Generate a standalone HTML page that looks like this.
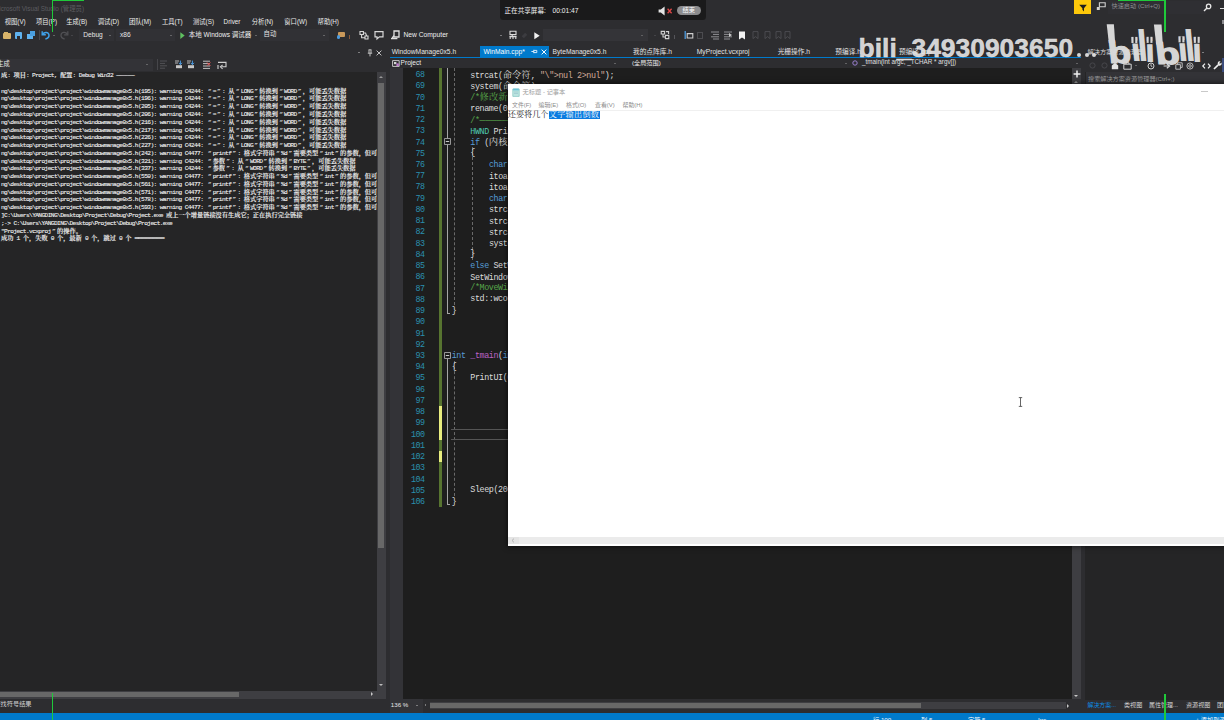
<!DOCTYPE html>
<html lang="zh-CN"><head><meta charset="utf-8"><title>Visual Studio</title>
<style>
html,body{margin:0;padding:0;background:#2d2d30;}
body{width:1224px;height:720px;overflow:hidden;position:relative;font-family:"Liberation Sans","Noto Sans CJK SC",sans-serif;}
#root{position:absolute;left:0;top:0;width:1224px;height:720px;overflow:hidden;background:#2d2d30;}
.b{position:absolute;}
.t{position:absolute;white-space:pre;font-family:"Liberation Sans","Noto Sans CJK SC",sans-serif;}
.m{position:absolute;white-space:pre;font-family:"Liberation Mono","Noto Serif CJK SC",monospace;}
.m i{font-style:normal;}
.cj{letter-spacing:0;}
svg{position:absolute;overflow:visible;}
</style><style>
.o{font-size:6.21px;color:#eeeeee;-webkit-text-stroke:0.12px #eeeeee;letter-spacing:-0.61px;}
.o .cj{letter-spacing:0;font-weight:600;}
.o .q{display:inline-block;width:6.21px;text-align:center;letter-spacing:0;}
.c .q{display:inline-block;width:9.3px;text-align:center;letter-spacing:0;}
.ln{font-size:8.4px;color:#2b91af;text-align:right;letter-spacing:-0.6px;}
.c{font-size:8.4px;letter-spacing:-0.39px;color:#dcdcdc;}
.c .cj{font-size:9.3px;letter-spacing:0;}
</style></head><body><div id="root">

<div class="t" style="left:-6px;top:4.72px;font-size:6.4px;line-height:8.96px;color:#5c5c60;">Microsoft Visual Studio (管理员)</div>
<div class="t" style="left:4.7px;top:18.29px;font-size:6.3px;line-height:8.82px;color:#ececec;">视图(V)</div>
<div class="t" style="left:36px;top:18.29px;font-size:6.3px;line-height:8.82px;color:#ececec;">项目(P)</div>
<div class="t" style="left:66.2px;top:18.29px;font-size:6.3px;line-height:8.82px;color:#ececec;">生成(B)</div>
<div class="t" style="left:97.8px;top:18.29px;font-size:6.3px;line-height:8.82px;color:#ececec;">调试(D)</div>
<div class="t" style="left:129px;top:18.29px;font-size:6.3px;line-height:8.82px;color:#ececec;">团队(M)</div>
<div class="t" style="left:162px;top:18.29px;font-size:6.3px;line-height:8.82px;color:#ececec;">工具(T)</div>
<div class="t" style="left:193px;top:18.29px;font-size:6.3px;line-height:8.82px;color:#ececec;">测试(S)</div>
<div class="t" style="left:223.6px;top:18.29px;font-size:6.3px;line-height:8.82px;color:#ececec;">Driver</div>
<div class="t" style="left:251.8px;top:18.29px;font-size:6.3px;line-height:8.82px;color:#ececec;">分析(N)</div>
<div class="t" style="left:284.3px;top:18.29px;font-size:6.3px;line-height:8.82px;color:#ececec;">窗口(W)</div>
<div class="t" style="left:317.6px;top:18.29px;font-size:6.3px;line-height:8.82px;color:#ececec;">帮助(H)</div>
<div class="b" style="left:3.0px;top:33.15px;width:8px;height:5.5px;background:#d8b36a;border-radius:1px;"></div>
<div class="b" style="left:3.5px;top:31.9px;width:4px;height:2px;background:#d8b36a;"></div>
<div class="b" style="left:15.25px;top:31.9px;width:6.5px;height:7px;background:#5fb2ee;border-radius:1px;"></div>
<div class="b" style="left:17.0px;top:35.7px;width:3px;height:3px;background:#2d2d30;"></div>
<div class="b" style="left:27.25px;top:33.65px;width:5.5px;height:5.5px;background:#5fb2ee;"></div>
<div class="b" style="left:30.0px;top:31.4px;width:5px;height:5px;background:#4a9fe0;"></div>
<div class="b" style="left:39px;top:30px;width:0.6px;height:10px;background:#46464a;"></div>
<svg style="left:41px;top:30.4px" width="10" height="10" viewBox="0 0 10 10"><path d="M1.2 1.2v3.6h3.6" fill="none" stroke="#3fa2ea" stroke-width="1.4"/><path d="M1.6 4.4C3.2 1.6 7.6 1.8 8 5c.2 2-1.4 3.4-3.6 4" fill="none" stroke="#3fa2ea" stroke-width="1.5"/></svg>
<div class="b" style="left:52.9px;top:34.6px;border-left:1.6px solid transparent;border-right:1.6px solid transparent;border-top:1.6px solid #9a9a9a;"></div>
<svg style="left:59px;top:30.4px" width="10" height="10" viewBox="0 0 10 10"><path d="M8.8 1.2v3.6H5.2" fill="none" stroke="#505054" stroke-width="1.3"/><path d="M8.4 4.4C6.8 1.6 2.4 1.8 2 5c-.2 2 1.4 3.4 3.6 4" fill="none" stroke="#505054" stroke-width="1.3"/></svg>
<div class="b" style="left:70.9px;top:34.6px;border-left:1.6px solid transparent;border-right:1.6px solid transparent;border-top:1.6px solid #5a5a5e;"></div>
<div class="b" style="left:79px;top:29.4px;width:35px;height:12px;background:#313135;"></div>
<div class="t" style="left:83.3px;top:30.28px;font-size:6.6px;line-height:9.24px;color:#e6e6e6;">Debug</div>
<div class="b" style="left:109.4px;top:34.6px;border-left:1.6px solid transparent;border-right:1.6px solid transparent;border-top:1.6px solid #9a9a9a;"></div>
<div class="b" style="left:116px;top:29.4px;width:59px;height:12px;background:#313135;"></div>
<div class="t" style="left:120px;top:30.28px;font-size:6.6px;line-height:9.24px;color:#e6e6e6;">x86</div>
<div class="b" style="left:169.9px;top:34.6px;border-left:1.6px solid transparent;border-right:1.6px solid transparent;border-top:1.6px solid #9a9a9a;"></div>
<svg style="left:180.2px;top:31.799999999999997px" width="5" height="8" viewBox="0 0 5 8"><path d="M0.3 0.3L4.7 3.6 0.3 6.9z" fill="#5fc060"/></svg>
<div class="t" style="left:188.8px;top:30.35px;font-size:6.5px;line-height:9.1px;color:#f0f0f0;">本地 Windows 调试器</div>
<div class="b" style="left:254.9px;top:34.6px;border-left:1.6px solid transparent;border-right:1.6px solid transparent;border-top:1.6px solid #9a9a9a;"></div>
<div class="b" style="left:260px;top:29.4px;width:69px;height:12px;background:#313135;"></div>
<div class="t" style="left:263.6px;top:30.42px;font-size:6.4px;line-height:8.96px;color:#e6e6e6;">自动</div>
<div class="b" style="left:323.4px;top:34.6px;border-left:1.6px solid transparent;border-right:1.6px solid transparent;border-top:1.6px solid #9a9a9a;"></div>
<div class="b" style="left:337.5px;top:32.4px;width:7px;height:5px;background:#c9985a;border-radius:1px;"></div>
<div class="b" style="left:336.75px;top:35.15px;width:3.5px;height:3.5px;background:#4b9be0;border-radius:2px;"></div>
<div class="b" style="left:348.6px;top:35.4px;width:1.8px;height:4px;background:#8a5a3c;"></div>
<svg style="left:358.5px;top:30.4px" width="10" height="10" viewBox="0 0 10 10"><path d="M1 1.5h3.4v3H1zM6 6h3v3H6zM4.4 3h2.2l1 3M2.6 4.5v3.2h3.4" fill="none" stroke="#d8d8d8" stroke-width="1.1"/></svg>
<svg style="left:373.5px;top:30.4px" width="10" height="10" viewBox="0 0 10 10"><path d="M1 1.6h8v5.2H5.4L3 9V6.8H1z" fill="none" stroke="#d8d8d8" stroke-width="1.2"/></svg>
<svg style="left:390px;top:30.4px" width="10" height="10" viewBox="0 0 10 10"><path d="M4 1h5v6H4zM1 8.6h6.4M2 8.4l2-3" fill="none" stroke="#e0e0e0" stroke-width="1.3"/></svg>
<div class="t" style="left:403.5px;top:30.21px;font-size:6.7px;line-height:9.38px;color:#f0f0f0;">New Computer</div>
<div class="b" style="left:500.4px;top:34.6px;border-left:1.6px solid transparent;border-right:1.6px solid transparent;border-top:1.6px solid #c8c8c8;"></div>
<svg style="left:508px;top:30.4px" width="10" height="10" viewBox="0 0 10 10"><path d="M2 1.2h6v3.4H2zM4.2 4.6v2M1.4 6.6h7.2M2.2 6.8v2.2M5 6.8v2.2M7.8 6.8v2.2" fill="none" stroke="#dcdcdc" stroke-width="1.1"/></svg>
<div class="b" style="left:522px;top:33.9px;width:5px;height:3px;background:#3c3c40;transform:rotate(-45deg);"></div>
<svg style="left:533.6px;top:31.599999999999998px" width="6" height="8" viewBox="0 0 6 8"><path d="M0.3 0.3L5.7 3.8 0.3 7.3z" fill="#f2f2f2"/></svg>
<div class="b" style="left:543px;top:28.8px;width:104.5px;height:12.6px;background:#343438;"></div>
<div class="b" style="left:641.4px;top:34.6px;border-left:1.6px solid transparent;border-right:1.6px solid transparent;border-top:1.6px solid #8a8a8a;"></div>
<div class="b" style="left:653.6px;top:34.699999999999996px;border-left:1.4px solid transparent;border-right:1.4px solid transparent;border-top:1.4px solid #5a5a5e;"></div>
<svg style="left:660px;top:30.4px" width="10" height="10" viewBox="0 0 10 10"><path d="M1.2 1.4h3.4v2.6H1.2zM5.4 5.4h3.4v3.2H5.4zM3 4v3h2.4M6 1.6h2.6v2.4" fill="none" stroke="#d2d2d2" stroke-width="1.1"/></svg>
<div class="b" style="left:673.6px;top:34.9px;width:1.2px;height:4.5px;background:#55555a;"></div>
<svg style="left:684px;top:30.4px" width="10" height="10" viewBox="0 0 10 10"><path d="M1.2 1v8" stroke="#4b9be0" stroke-width="1.3"/><path d="M3.2 3.6h5.6v4.4H3.2z" fill="none" stroke="#cfcfcf" stroke-width="1.1"/></svg>
<div class="b" style="left:697px;top:32.4px;width:6px;height:6.5px;background:transparent;border:0.8px solid #4c4c50;box-sizing:border-box;"></div>
<svg style="left:710px;top:30.4px" width="10" height="10" viewBox="0 0 10 10"><path d="M1 2h8M3 4.4h6M1 6.8h8M3 9h6" stroke="#9a9a9e" stroke-width="0.9"/></svg>
<svg style="left:722.5px;top:30.4px" width="10" height="10" viewBox="0 0 10 10"><path d="M1 2h8M1 4.4h6M1 6.8h8M1 9h6" stroke="#9a9a9e" stroke-width="0.9"/><path d="M6 3l3 2-3 2z" fill="#c8c8c8"/></svg>
<svg style="left:737.5px;top:30.799999999999997px" width="8" height="10" viewBox="0 0 8 10"><path d="M1 0.6h6v8L4 6.4 1 8.6z" fill="#f2f2f2"/></svg>
<svg style="left:751.5px;top:31.0px" width="7" height="9" viewBox="0 0 7 9"><path d="M1 0.6h5v7L3.5 5.6 1 7.6z" fill="none" stroke="#4e4e52" stroke-width="0.9"/></svg>
<svg style="left:763.5px;top:31.0px" width="7" height="9" viewBox="0 0 7 9"><path d="M1 0.6h5v7L3.5 5.6 1 7.6z" fill="none" stroke="#4e4e52" stroke-width="0.9"/></svg>
<svg style="left:774.5px;top:31.0px" width="7" height="9" viewBox="0 0 7 9"><path d="M1 0.6h5v7L3.5 5.6 1 7.6z" fill="none" stroke="#4e4e52" stroke-width="0.9"/></svg>
<svg style="left:783.5px;top:31.0px" width="7" height="9" viewBox="0 0 7 9"><path d="M1 0.6h5v7L3.5 5.6 1 7.6z" fill="none" stroke="#4e4e52" stroke-width="0.9"/></svg>
<div class="b" style="left:499.5px;top:-4px;width:206.5px;height:24.4px;background:#1a1a1b;border-radius:3.5px;"></div>
<div class="t" style="left:504.5px;top:5.58px;font-size:6.6px;line-height:9.24px;color:#f0f0f0;">正在共享屏幕:</div>
<div class="t" style="left:552.5px;top:5.51px;font-size:6.7px;line-height:9.38px;color:#f0f0f0;">00:01:47</div>
<svg style="left:658px;top:5.6px" width="16" height="10" viewBox="0 0 16 10"><path d="M0.6 3.4h2.2L6.6 0.6v8.8L2.8 6.6H0.6z" fill="#e4e4e4"/><path d="M9.6 2.8l4 4.4M13.6 2.8l-4 4.4" stroke="#e04848" stroke-width="1.3"/></svg>
<div class="b" style="left:676.5px;top:5.6px;width:24.5px;height:9.8px;background:#8c8c8e;border-radius:5px;"></div>
<div class="t" style="left:682.5px;top:6.06px;font-size:6.2px;line-height:8.68px;color:#ffffff;">结束</div>
<div class="b" style="left:1074px;top:0px;width:17px;height:14.4px;background:#fdc80a;"></div>
<svg style="left:1077.5px;top:3.5px" width="10" height="8" viewBox="0 0 10 8"><path d="M1.2 0.8h7.6L6 4.2v3.4L4.4 5.8V4.2z" fill="#1e1e1e"/></svg>
<svg style="left:1095.5px;top:2.2px" width="10" height="9" viewBox="0 0 10 9"><path d="M3.4 0.8h5.8v4H3.4z" fill="none" stroke="#d0d0d0" stroke-width="1.1"/><path d="M0.8 5h3v3h-3z" fill="#d0d0d0"/></svg>
<div class="b" style="left:1108px;top:0.5px;width:98px;height:13px;background:#2f2f33;"></div>
<div class="t" style="left:1111.5px;top:2.46px;font-size:6.2px;line-height:8.68px;color:#8e8e92;">快速启动 (Ctrl+Q)</div>
<svg style="left:1203px;top:2.6px" width="9" height="9" viewBox="0 0 9 9"><circle cx="5.6" cy="3.4" r="2.2" fill="none" stroke="#e8e8e8" stroke-width="1.3"/><path d="M4 5l-3 3" stroke="#e8e8e8" stroke-width="1.5"/></svg>
<div class="b" style="left:1220px;top:8px;width:4px;height:1.2px;background:#dcdcdc;"></div>
<div class="b" style="left:1221.5px;top:20px;width:3px;height:4px;background:#8a8a8e;"></div>
<div class="b" style="left:358.2px;top:51.7px;border-left:1.8px solid transparent;border-right:1.8px solid transparent;border-top:1.8px solid #d0d0d0;"></div>
<svg style="left:366.6px;top:48.6px" width="6" height="8" viewBox="0 0 6 8"><path d="M1.6 0.8h2.8M2 0.8v3.4M4 0.8v3.4M0.8 4.2h4.4M3 4.2v3.2" fill="none" stroke="#d0d0d0" stroke-width="0.9"/></svg>
<svg style="left:375.6px;top:49.6px" width="6" height="6" viewBox="0 0 6 6"><path d="M0.6 0.6l4.8 4.8M5.4 0.6L0.6 5.4" stroke="#d6d6d6" stroke-width="0.9"/></svg>
<div class="b" style="left:480.4px;top:46.2px;width:68.2px;height:11px;background:#007acc;"></div>
<div class="t" style="left:483.5px;top:46.71px;font-size:6.7px;line-height:9.38px;color:#ffffff;">WinMain.cpp*</div>
<svg style="left:531px;top:49.4px" width="7" height="5" viewBox="0 0 7 5"><path d="M0.4 2.5h2.4M2.8 0.8v3.4M2.8 1.4h3v2.2h-3" fill="none" stroke="#e8f4ff" stroke-width="0.9"/></svg>
<svg style="left:540.6px;top:49px" width="6" height="6" viewBox="0 0 6 6"><path d="M0.6 0.6l4.8 4.8M5.4 0.6L0.6 5.4" stroke="#f4faff" stroke-width="1"/></svg>
<div class="t" style="left:391.8px;top:46.81px;font-size:6.7px;line-height:9.38px;color:#e4e4e4;">WindowManage0x5.h</div>
<div class="t" style="left:552.5px;top:46.81px;font-size:6.7px;line-height:9.38px;color:#e4e4e4;">ByteManage0x5.h</div>
<div class="t" style="left:633px;top:46.81px;font-size:6.7px;line-height:9.38px;color:#e4e4e4;">我的点阵库.h</div>
<div class="t" style="left:696.8px;top:46.81px;font-size:6.7px;line-height:9.38px;color:#e4e4e4;">MyProject.vcxproj</div>
<div class="t" style="left:777.7px;top:46.81px;font-size:6.7px;line-height:9.38px;color:#e4e4e4;">光栅操作.h</div>
<div class="t" style="left:835.3px;top:46.81px;font-size:6.7px;line-height:9.38px;color:#e4e4e4;">预编译.h</div>
<div class="t" style="left:899px;top:46.81px;font-size:6.7px;line-height:9.38px;color:#e4e4e4;">预编译.cpp</div>
<div class="b" style="left:389.5px;top:57px;width:691.5px;height:1.1px;background:#007acc;"></div>
<div class="b" style="left:0px;top:58.7px;width:152.5px;height:12.2px;background:#333337;"></div>
<div class="t" style="left:-2.8px;top:60.39px;font-size:6.3px;line-height:8.82px;color:#e6e6e6;">生成</div>
<div class="b" style="left:146.4px;top:64.2px;border-left:1.6px solid transparent;border-right:1.6px solid transparent;border-top:1.6px solid #9a9a9a;"></div>
<div class="b" style="left:157px;top:59px;width:0.6px;height:11px;background:#46464a;"></div>
<svg style="left:159px;top:60px" width="9" height="10" viewBox="0 0 9 10"><path d="M1 1h7M1 3.4h5M1 5.8h7M1 8.2h5" stroke="#56565a" stroke-width="0.9"/></svg>
<svg style="left:174.0px;top:60.4px" width="9" height="9" viewBox="0 0 9 9"><path d="M1 1h4M1 3h3" stroke="#c8c8c8" stroke-width="0.9"/><path d="M2 5.2h6v3H2z" fill="#c8c8c8"/><path d="M6.4 0.6v4M4.8 2.8l1.6 1.8L8 2.8" fill="none" stroke="#4b9be0" stroke-width="1"/></svg>
<svg style="left:185.5px;top:60.4px" width="9" height="9" viewBox="0 0 9 9"><path d="M1 1h4M1 3h3" stroke="#c8c8c8" stroke-width="0.9"/><path d="M2 5.2h6v3H2z" fill="#c8c8c8"/><path d="M6.4 0.6v4M4.8 2.8l1.6 1.8L8 2.8" fill="none" stroke="#4b9be0" stroke-width="1"/></svg>
<svg style="left:201.5px;top:60.2px" width="9" height="10" viewBox="0 0 9 10"><path d="M1 1.2h7M1 3.6h7M1 6h7M1 8.4h7" stroke="#d0d0d0" stroke-width="0.9"/><path d="M5 2.4l3.4 3.4M8.4 2.4L5 5.8" stroke="#e05050" stroke-width="1"/></svg>
<svg style="left:216.5px;top:60.6px" width="10" height="9" viewBox="0 0 10 9"><path d="M1 1.4h8v4.4H4.4" fill="none" stroke="#d0d0d0" stroke-width="1.1"/><path d="M5.6 3.8L3.4 5.8l2.2 2M1 4v4" fill="none" stroke="#d0d0d0" stroke-width="1.1"/></svg>
<div class="b" style="left:0px;top:71.8px;width:376.5px;height:618.8px;background:#252526;"></div>
<div class="b" style="left:376.5px;top:71.8px;width:9.5px;height:618.8px;background:#3e3e42;"></div>
<div class="b" style="left:378.6px;top:75.5px;border-left:2.2px solid transparent;border-right:2.2px solid transparent;border-bottom:2.2px solid #999;"></div>
<div class="b" style="left:377.6px;top:82.6px;width:6.4px;height:465px;background:#686868;"></div>
<div class="b" style="left:378.6px;top:683.9px;border-left:2.2px solid transparent;border-right:2.2px solid transparent;border-top:2.2px solid #bdbdbd;"></div>
<div class="b" style="left:0px;top:690.6px;width:386px;height:8px;background:#3e3e42;"></div>
<div class="b" style="left:0px;top:691.6px;width:239px;height:5.6px;background:#686868;"></div>
<div class="b" style="left:371.0px;top:692.4px;border-top:2px solid transparent;border-bottom:2px solid transparent;border-left:2px solid #c8c8c8;"></div>
<div class="t" style="left:-5.6px;top:700.26px;font-size:6.2px;line-height:8.68px;color:#d0d0d0;">查找符号结果</div>
<div class="b" style="left:0;top:71.8px;width:376.5px;height:618.8px;overflow:hidden;">
<div class="m o" style="left:1.0px;top:0.4px;line-height:8px;"><i class="cj">成</i>: <i class="cj">项目</i>: Project, <i class="cj">配置</i>: Debug Win32 <i class="cj">—————</i></div>
<div class="m o" style="left:1.0px;top:15.93px;line-height:8px;">ng\desktop\project\project\windowmanage0x5.h(195): warning C4244: <i class="q">“</i>=<i class="q">”</i>: <i class="cj">从</i><i class="q">“</i>LONG<i class="q">”</i><i class="cj">转换到</i><i class="q">“</i>WORD<i class="q">”</i><i class="cj">，可能丢失数据</i></div>
<div class="m o" style="left:1.0px;top:23.7px;line-height:8px;">ng\desktop\project\project\windowmanage0x5.h(196): warning C4244: <i class="q">“</i>=<i class="q">”</i>: <i class="cj">从</i><i class="q">“</i>LONG<i class="q">”</i><i class="cj">转换到</i><i class="q">“</i>WORD<i class="q">”</i><i class="cj">，可能丢失数据</i></div>
<div class="m o" style="left:1.0px;top:31.47px;line-height:8px;">ng\desktop\project\project\windowmanage0x5.h(205): warning C4244: <i class="q">“</i>=<i class="q">”</i>: <i class="cj">从</i><i class="q">“</i>LONG<i class="q">”</i><i class="cj">转换到</i><i class="q">“</i>WORD<i class="q">”</i><i class="cj">，可能丢失数据</i></div>
<div class="m o" style="left:1.0px;top:39.23px;line-height:8px;">ng\desktop\project\project\windowmanage0x5.h(206): warning C4244: <i class="q">“</i>=<i class="q">”</i>: <i class="cj">从</i><i class="q">“</i>LONG<i class="q">”</i><i class="cj">转换到</i><i class="q">“</i>WORD<i class="q">”</i><i class="cj">，可能丢失数据</i></div>
<div class="m o" style="left:1.0px;top:47.0px;line-height:8px;">ng\desktop\project\project\windowmanage0x5.h(216): warning C4244: <i class="q">“</i>=<i class="q">”</i>: <i class="cj">从</i><i class="q">“</i>LONG<i class="q">”</i><i class="cj">转换到</i><i class="q">“</i>WORD<i class="q">”</i><i class="cj">，可能丢失数据</i></div>
<div class="m o" style="left:1.0px;top:54.77px;line-height:8px;">ng\desktop\project\project\windowmanage0x5.h(217): warning C4244: <i class="q">“</i>=<i class="q">”</i>: <i class="cj">从</i><i class="q">“</i>LONG<i class="q">”</i><i class="cj">转换到</i><i class="q">“</i>WORD<i class="q">”</i><i class="cj">，可能丢失数据</i></div>
<div class="m o" style="left:1.0px;top:62.54px;line-height:8px;">ng\desktop\project\project\windowmanage0x5.h(226): warning C4244: <i class="q">“</i>=<i class="q">”</i>: <i class="cj">从</i><i class="q">“</i>LONG<i class="q">”</i><i class="cj">转换到</i><i class="q">“</i>WORD<i class="q">”</i><i class="cj">，可能丢失数据</i></div>
<div class="m o" style="left:1.0px;top:70.3px;line-height:8px;">ng\desktop\project\project\windowmanage0x5.h(227): warning C4244: <i class="q">“</i>=<i class="q">”</i>: <i class="cj">从</i><i class="q">“</i>LONG<i class="q">”</i><i class="cj">转换到</i><i class="q">“</i>WORD<i class="q">”</i><i class="cj">，可能丢失数据</i></div>
<div class="m o" style="left:1.0px;top:78.07px;line-height:8px;">ng\desktop\project\project\windowmanage0x5.h(242): warning C4477: <i class="q">“</i>printf<i class="q">”</i>: <i class="cj">格式字符串</i><i class="q">“</i>%d<i class="q">”</i><i class="cj">需要类型</i><i class="q">“</i>int<i class="q">”</i><i class="cj">的参数，但可变参数</i> 1 <i class="cj">拥有了类型</i><i class="q">“</i>HWND<i class="q">”</i></div>
<div class="m o" style="left:1.0px;top:85.84px;line-height:8px;">ng\desktop\project\project\windowmanage0x5.h(321): warning C4244: <i class="q">“</i><i class="cj">参数</i><i class="q">”</i>: <i class="cj">从</i><i class="q">“</i>WORD<i class="q">”</i><i class="cj">转换到</i><i class="q">“</i>BYTE<i class="q">”</i><i class="cj">，可能丢失数据</i></div>
<div class="m o" style="left:1.0px;top:93.6px;line-height:8px;">ng\desktop\project\project\windowmanage0x5.h(337): warning C4244: <i class="q">“</i><i class="cj">参数</i><i class="q">”</i>: <i class="cj">从</i><i class="q">“</i>WORD<i class="q">”</i><i class="cj">转换到</i><i class="q">“</i>BYTE<i class="q">”</i><i class="cj">，可能丢失数据</i></div>
<div class="m o" style="left:1.0px;top:101.37px;line-height:8px;">ng\desktop\project\project\windowmanage0x5.h(550): warning C4477: <i class="q">“</i>printf<i class="q">”</i>: <i class="cj">格式字符串</i><i class="q">“</i>%d<i class="q">”</i><i class="cj">需要类型</i><i class="q">“</i>int<i class="q">”</i><i class="cj">的参数，但可变参数</i> 1 <i class="cj">拥有了类型</i><i class="q">“</i>HWND<i class="q">”</i></div>
<div class="m o" style="left:1.0px;top:109.14px;line-height:8px;">ng\desktop\project\project\windowmanage0x5.h(561): warning C4477: <i class="q">“</i>printf<i class="q">”</i>: <i class="cj">格式字符串</i><i class="q">“</i>%d<i class="q">”</i><i class="cj">需要类型</i><i class="q">“</i>int<i class="q">”</i><i class="cj">的参数，但可变参数</i> 1 <i class="cj">拥有了类型</i><i class="q">“</i>HWND<i class="q">”</i></div>
<div class="m o" style="left:1.0px;top:116.91px;line-height:8px;">ng\desktop\project\project\windowmanage0x5.h(571): warning C4477: <i class="q">“</i>printf<i class="q">”</i>: <i class="cj">格式字符串</i><i class="q">“</i>%d<i class="q">”</i><i class="cj">需要类型</i><i class="q">“</i>int<i class="q">”</i><i class="cj">的参数，但可变参数</i> 1 <i class="cj">拥有了类型</i><i class="q">“</i>HWND<i class="q">”</i></div>
<div class="m o" style="left:1.0px;top:124.67px;line-height:8px;">ng\desktop\project\project\windowmanage0x5.h(578): warning C4477: <i class="q">“</i>printf<i class="q">”</i>: <i class="cj">格式字符串</i><i class="q">“</i>%d<i class="q">”</i><i class="cj">需要类型</i><i class="q">“</i>int<i class="q">”</i><i class="cj">的参数，但可变参数</i> 1 <i class="cj">拥有了类型</i><i class="q">“</i>HWND<i class="q">”</i></div>
<div class="m o" style="left:1.0px;top:132.44px;line-height:8px;">ng\desktop\project\project\windowmanage0x5.h(593): warning C4477: <i class="q">“</i>printf<i class="q">”</i>: <i class="cj">格式字符串</i><i class="q">“</i>%d<i class="q">”</i><i class="cj">需要类型</i><i class="q">“</i>int<i class="q">”</i><i class="cj">的参数，但可变参数</i> 1 <i class="cj">拥有了类型</i><i class="q">“</i>HWND<i class="q">”</i></div>
<div class="m o" style="left:1.0px;top:140.21px;line-height:8px;">]C:\Users\YANGDING\Desktop\Project\Debug\Project.exe <i class="cj">或上一个增量链接没有生成它；正在执行完全链接</i></div>
<div class="m o" style="left:1.0px;top:147.97px;line-height:8px;">;-&gt; C:\Users\YANGDING\Desktop\Project\Debug\Project.exe</div>
<div class="m o" style="left:1.0px;top:155.74px;line-height:8px;">"Project.vcxproj<i class="q">”</i><i class="cj">的操作。</i></div>
<div class="m o" style="left:1.0px;top:163.51px;line-height:8px;"><i class="cj">成功</i> 1 <i class="cj">个，失败</i> 0 <i class="cj">个，最新</i> 0 <i class="cj">个，跳过</i> 0 <i class="cj">个</i> <i class="cj">════════</i></div>
</div>
<div class="b" style="left:389.5px;top:58.1px;width:691.5px;height:10.2px;background:#2d2d30;"></div>
<div class="b" style="left:389.5px;top:68.3px;width:682.5px;height:631px;background:#1e1e1e;"></div>
<div class="b" style="left:389.5px;top:68.3px;width:13px;height:631px;background:#333337;"></div>
<svg style="left:392.2px;top:59.6px" width="8" height="7" viewBox="0 0 8 7"><path d="M0.6 0.6h6.6v5.8H0.6z" fill="none" stroke="#d6d6d6" stroke-width="0.9"/><path d="M2 2h2.4v2.2H2z" fill="#d6d6d6"/><path d="M4.4 3.4h2.4v2.6H4.4z" fill="#c27ad0"/></svg>
<div class="t" style="left:400.6px;top:58.08px;font-size:6.6px;line-height:9.24px;color:#ececec;">Project</div>
<div class="b" style="left:613.5px;top:62.65px;border-left:1.5px solid transparent;border-right:1.5px solid transparent;border-top:1.5px solid #9a9a9a;"></div>
<div class="t" style="left:631.9px;top:58.56px;font-size:6.2px;line-height:8.68px;color:#ececec;">(全局范围)</div>
<div class="b" style="left:844.5px;top:62.65px;border-left:1.5px solid transparent;border-right:1.5px solid transparent;border-top:1.5px solid #9a9a9a;"></div>
<svg style="left:852px;top:60.2px" width="6" height="6" viewBox="0 0 6 6"><circle cx="3" cy="3" r="2.2" fill="none" stroke="#9a7fd0" stroke-width="1"/></svg>
<div class="t" style="left:862px;top:58.39px;font-size:6.3px;line-height:8.82px;color:#e0e0e0;">_tmain(int argc, _TCHAR * argv[])</div>
<div class="b" style="left:1076.0px;top:62.65px;border-left:1.5px solid transparent;border-right:1.5px solid transparent;border-top:1.5px solid #9a9a9a;"></div>
<div class="b" style="left:1072px;top:68.3px;width:9px;height:631px;background:#3e3e42;"></div>
<svg style="left:1072.6px;top:70px" width="8" height="8" viewBox="0 0 8 8"><path d="M4 0.6v6.8M0.6 4h6.8" stroke="#f0f0f0" stroke-width="1.5"/></svg>
<div class="b" style="left:1074.4px;top:81.0px;border-left:2px solid transparent;border-right:2px solid transparent;border-bottom:2px solid #999;"></div>
<div class="b" style="left:1074.2px;top:694.9px;border-left:2.2px solid transparent;border-right:2.2px solid transparent;border-top:2.2px solid #c8c8c8;"></div>
<div class="b" style="left:389.5px;top:699.3px;width:691.5px;height:13.5px;background:#2d2d30;"></div>
<div class="b" style="left:389.5px;top:699.3px;width:33px;height:13.5px;background:#333337;"></div>
<div class="t" style="left:390.8px;top:701.26px;font-size:6.2px;line-height:8.68px;color:#e6e6e6;">136 %</div>
<div class="b" style="left:416.1px;top:705.05px;border-left:1.5px solid transparent;border-right:1.5px solid transparent;border-top:1.5px solid #c8c8c8;"></div>
<div class="b" style="left:425.1px;top:703.8000000000001px;border-top:1.8px solid transparent;border-bottom:1.8px solid transparent;border-right:1.8px solid #c8c8c8;"></div>
<div class="b" style="left:430px;top:701.6px;width:636px;height:7.4px;background:#3e3e42;"></div>
<div class="b" style="left:430px;top:702.6px;width:491px;height:5.4px;background:#686868;"></div>
<div class="b" style="left:1066.5px;top:703.6px;border-top:2px solid transparent;border-bottom:2px solid transparent;border-left:2px solid #c8c8c8;"></div>
<div class="b" style="left:438.7px;top:68.3px;width:3.7px;height:337.61px;background:#577430;"></div>
<div class="b" style="left:438.7px;top:405.91px;width:3.7px;height:33.71px;background:#e9ed7f;"></div>
<div class="b" style="left:438.7px;top:439.62px;width:3.7px;height:11.24px;background:#577430;"></div>
<div class="b" style="left:438.7px;top:450.86px;width:3.7px;height:11.24px;background:#e9ed7f;"></div>
<div class="b" style="left:438.7px;top:462.1px;width:3.7px;height:44.95px;background:#577430;"></div>
<div class="b" style="left:447px;top:68.3px;width:0.9px;height:245.077px;background:#a5a5a5;"></div>
<div class="b" style="left:447px;top:313.38px;width:3.2px;height:0.9px;background:#a5a5a5;"></div>
<div class="b" style="left:447px;top:355.33px;width:0.9px;height:149.08px;background:#a5a5a5;"></div>
<div class="b" style="left:447px;top:504.41px;width:3.2px;height:0.9px;background:#a5a5a5;"></div>
<svg style="left:444px;top:138.42px" width="7" height="7" viewBox="0 0 7 7"><path d="M0.5 0.5h6v6h-6z" fill="#1e1e1e" stroke="#a5a5a5" stroke-width="0.9"/><path d="M1.8 3.5h3.4" stroke="#dcdcdc" stroke-width="0.9"/></svg>
<svg style="left:444px;top:351.93px" width="7" height="7" viewBox="0 0 7 7"><path d="M0.5 0.5h6v6h-6z" fill="#1e1e1e" stroke="#a5a5a5" stroke-width="0.9"/><path d="M1.8 3.5h3.4" stroke="#dcdcdc" stroke-width="0.9"/></svg>
<div class="b" style="left:453.6px;top:68.3px;height:236.48px;width:0;border-left:0.9px dashed #6a6a6a;"></div>
<div class="b" style="left:472px;top:147.46px;height:112.37px;width:0;border-left:0.9px dashed #6a6a6a;"></div>
<div class="b" style="left:453.6px;top:360.96px;height:134.84px;width:0;border-left:0.9px dashed #6a6a6a;"></div>
<div class="b" style="left:451px;top:429.4px;width:625px;height:9.4px;background:transparent;border-top:1px solid #555;border-bottom:1px solid #555;box-sizing:content-box;height:8.4px;"></div>
<div class="b" style="left:0;top:68.3px;width:1072px;height:631px;overflow:hidden;">
<div class="m ln" style="left:404px;width:20.4px;top:1.8px;line-height:11px;">68</div>
<div class="m c" style="left:470.3px;top:1.3px;line-height:11px;"><span style="color:#dcdcdc">strcat(<i class="cj">命令符</i>, </span><span style="color:#cfa898">"\"&gt;nul 2&gt;nul"</span><span style="color:#dcdcdc">);</span></div>
<div class="m ln" style="left:404px;width:20.4px;top:13.04px;line-height:11px;">69</div>
<div class="m c" style="left:470.3px;top:12.54px;line-height:11px;"><span style="color:#dcdcdc">system(<i class="cj">命令符</i>);</span></div>
<div class="m ln" style="left:404px;width:20.4px;top:24.27px;line-height:11px;">70</div>
<div class="m c" style="left:470.3px;top:23.77px;line-height:11px;"><span style="color:#57a64a">/*<i class="cj">修改新生成文件的名字</i>*/</span></div>
<div class="m ln" style="left:404px;width:20.4px;top:35.51px;line-height:11px;">71</div>
<div class="m c" style="left:470.3px;top:35.01px;line-height:11px;"><span style="color:#dcdcdc">rename(0x5<i class="cj">文件名</i>, <i class="cj">目标文件名</i>);</span></div>
<div class="m ln" style="left:404px;width:20.4px;top:46.75px;line-height:11px;">72</div>
<div class="m c" style="left:470.3px;top:46.25px;line-height:11px;"><span style="color:#57a64a">/*<i class="cj">——————————————————</i>*/</span></div>
<div class="m ln" style="left:404px;width:20.4px;top:57.99px;line-height:11px;">73</div>
<div class="m c" style="left:470.3px;top:57.49px;line-height:11px;"><span style="color:#4ec9b0">HWND</span><span style="color:#dcdcdc"> PrintWnd = FindWindow(NULL, <i class="cj">标题</i>);</span></div>
<div class="m ln" style="left:404px;width:20.4px;top:69.22px;line-height:11px;">74</div>
<div class="m c" style="left:470.3px;top:68.72px;line-height:11px;"><span style="color:#569cd6">if</span><span style="color:#dcdcdc"> (<i class="cj">内核对象</i> != NULL)</span></div>
<div class="m ln" style="left:404px;width:20.4px;top:80.46px;line-height:11px;">75</div>
<div class="m c" style="left:470.3px;top:79.96px;line-height:11px;"><span style="color:#dcdcdc">{</span></div>
<div class="m ln" style="left:404px;width:20.4px;top:91.7px;line-height:11px;">76</div>
<div class="m c" style="left:488.9px;top:91.2px;line-height:11px;"><span style="color:#569cd6">char</span><span style="color:#dcdcdc"> <i class="cj">宽</i>[8], <i class="cj">高</i>[8];</span></div>
<div class="m ln" style="left:404px;width:20.4px;top:102.93px;line-height:11px;">77</div>
<div class="m c" style="left:488.9px;top:102.43px;line-height:11px;"><span style="color:#dcdcdc">itoa(<i class="cj">列数</i>, <i class="cj">宽</i>, 10);</span></div>
<div class="m ln" style="left:404px;width:20.4px;top:114.17px;line-height:11px;">78</div>
<div class="m c" style="left:488.9px;top:113.67px;line-height:11px;"><span style="color:#dcdcdc">itoa(<i class="cj">行数</i>, <i class="cj">高</i>, 10);</span></div>
<div class="m ln" style="left:404px;width:20.4px;top:125.41px;line-height:11px;">79</div>
<div class="m c" style="left:488.9px;top:124.91px;line-height:11px;"><span style="color:#569cd6">char</span><span style="color:#dcdcdc"> <i class="cj">命令</i>[64] = "mode con cols=";</span></div>
<div class="m ln" style="left:404px;width:20.4px;top:136.64px;line-height:11px;">80</div>
<div class="m c" style="left:488.9px;top:136.14px;line-height:11px;"><span style="color:#dcdcdc">strcat(<i class="cj">命令</i>, <i class="cj">宽</i>);</span></div>
<div class="m ln" style="left:404px;width:20.4px;top:147.88px;line-height:11px;">81</div>
<div class="m c" style="left:488.9px;top:147.38px;line-height:11px;"><span style="color:#dcdcdc">strcat(<i class="cj">命令</i>, " lines=");</span></div>
<div class="m ln" style="left:404px;width:20.4px;top:159.12px;line-height:11px;">82</div>
<div class="m c" style="left:488.9px;top:158.62px;line-height:11px;"><span style="color:#dcdcdc">strcat(<i class="cj">命令</i>, <i class="cj">高</i>);</span></div>
<div class="m ln" style="left:404px;width:20.4px;top:170.36px;line-height:11px;">83</div>
<div class="m c" style="left:488.9px;top:169.86px;line-height:11px;"><span style="color:#dcdcdc">system(<i class="cj">命令</i>);</span></div>
<div class="m ln" style="left:404px;width:20.4px;top:181.59px;line-height:11px;">84</div>
<div class="m c" style="left:470.3px;top:181.09px;line-height:11px;"><span style="color:#dcdcdc">}</span></div>
<div class="m ln" style="left:404px;width:20.4px;top:192.83px;line-height:11px;">85</div>
<div class="m c" style="left:470.3px;top:192.33px;line-height:11px;"><span style="color:#569cd6">else</span><span style="color:#dcdcdc"> SetWindowPos(PrintWnd, 0, 0, 0, 0, 0, 1);</span></div>
<div class="m ln" style="left:404px;width:20.4px;top:204.07px;line-height:11px;">86</div>
<div class="m c" style="left:470.3px;top:203.57px;line-height:11px;"><span style="color:#dcdcdc">SetWindowTextA(PrintWnd, <i class="cj">标题</i>);</span></div>
<div class="m ln" style="left:404px;width:20.4px;top:215.3px;line-height:11px;">87</div>
<div class="m c" style="left:470.3px;top:214.8px;line-height:11px;"><span style="color:#57a64a">/*MoveWindow(PrintWnd, 0, 0, 800, 600, TRUE);*/</span></div>
<div class="m ln" style="left:404px;width:20.4px;top:226.54px;line-height:11px;">88</div>
<div class="m c" style="left:470.3px;top:226.04px;line-height:11px;"><span style="color:#dcdcdc">std::wcout.imbue(std::locale("chs"));</span></div>
<div class="m ln" style="left:404px;width:20.4px;top:237.78px;line-height:11px;">89</div>
<div class="m c" style="left:451.7px;top:237.28px;line-height:11px;"><span style="color:#dcdcdc">}</span></div>
<div class="m ln" style="left:404px;width:20.4px;top:249.01px;line-height:11px;">90</div>
<div class="m ln" style="left:404px;width:20.4px;top:260.25px;line-height:11px;">91</div>
<div class="m ln" style="left:404px;width:20.4px;top:271.49px;line-height:11px;">92</div>
<div class="m ln" style="left:404px;width:20.4px;top:282.73px;line-height:11px;">93</div>
<div class="m c" style="left:451.7px;top:282.23px;line-height:11px;"><span style="color:#569cd6">int</span><span style="color:#bd63c5"> _tmain</span><span style="color:#dcdcdc">(</span><span style="color:#569cd6">int</span><span style="color:#dcdcdc"> argc, _TCHAR* argv[])</span></div>
<div class="m ln" style="left:404px;width:20.4px;top:293.96px;line-height:11px;">94</div>
<div class="m c" style="left:451.7px;top:293.46px;line-height:11px;"><span style="color:#dcdcdc">{</span></div>
<div class="m ln" style="left:404px;width:20.4px;top:305.2px;line-height:11px;">95</div>
<div class="m c" style="left:470.3px;top:304.7px;line-height:11px;"><span style="color:#dcdcdc">PrintUI(0, 0, 80, 25);</span></div>
<div class="m ln" style="left:404px;width:20.4px;top:316.44px;line-height:11px;">96</div>
<div class="m ln" style="left:404px;width:20.4px;top:327.67px;line-height:11px;">97</div>
<div class="m ln" style="left:404px;width:20.4px;top:338.91px;line-height:11px;">98</div>
<div class="m ln" style="left:404px;width:20.4px;top:350.15px;line-height:11px;">99</div>
<div class="m ln" style="left:404px;width:20.4px;top:361.38px;line-height:11px;">100</div>
<div class="m ln" style="left:404px;width:20.4px;top:372.62px;line-height:11px;">101</div>
<div class="m ln" style="left:404px;width:20.4px;top:383.86px;line-height:11px;">102</div>
<div class="m ln" style="left:404px;width:20.4px;top:395.1px;line-height:11px;">103</div>
<div class="m ln" style="left:404px;width:20.4px;top:406.33px;line-height:11px;">104</div>
<div class="m ln" style="left:404px;width:20.4px;top:417.57px;line-height:11px;">105</div>
<div class="m c" style="left:470.3px;top:417.07px;line-height:11px;"><span style="color:#dcdcdc">Sleep(20000);</span></div>
<div class="m ln" style="left:404px;width:20.4px;top:428.81px;line-height:11px;">106</div>
<div class="m c" style="left:451.7px;top:428.31px;line-height:11px;"><span style="color:#dcdcdc">}</span></div>
</div>
<div class="b" style="left:1085px;top:46px;width:139px;height:667px;background:#252526;"></div>
<div class="b" style="left:1085px;top:46px;width:139px;height:26.4px;background:#2d2d30;"></div>
<div class="t" style="left:1087.6px;top:48.26px;font-size:6.2px;line-height:8.68px;color:#d8d8d8;">解决方案资源管理器</div>
<div class="b" style="left:1202.2px;top:51.9px;border-left:1.8px solid transparent;border-right:1.8px solid transparent;border-top:1.8px solid #d0d0d0;"></div>
<svg style="left:1088.5px;top:62.3px" width="7" height="7" viewBox="0 0 7 7"><circle cx="3.5" cy="3.5" r="2.6" fill="none" stroke="#47474b" stroke-width="1"/></svg>
<svg style="left:1100.5px;top:62.3px" width="7" height="7" viewBox="0 0 7 7"><circle cx="3.5" cy="3.5" r="2.6" fill="none" stroke="#47474b" stroke-width="1"/></svg>
<svg style="left:1111px;top:61.8px" width="8" height="8" viewBox="0 0 8 8"><path d="M0.8 7.2V3.4L4 0.8l3.2 2.6v3.8z" fill="#e4e4e4"/></svg>
<svg style="left:1122.5px;top:61.8px" width="9" height="8" viewBox="0 0 9 8"><path d="M0.8 2.2h7.4v5H0.8zM3 2.2V0.8h3v1.4" fill="none" stroke="#d4d4d4" stroke-width="1"/></svg>
<div class="b" style="left:1135.1px;top:65.1px;border-left:1.4px solid transparent;border-right:1.4px solid transparent;border-top:1.4px solid #9a9a9a;"></div>
<svg style="left:1147px;top:61.8px" width="8" height="8" viewBox="0 0 8 8"><circle cx="4" cy="4" r="3" fill="none" stroke="#cfcfcf" stroke-width="1"/><path d="M4 2.2V4l1.4 0.8" fill="none" stroke="#cfcfcf" stroke-width="0.9"/></svg>
<svg style="left:1163px;top:62.8px" width="8" height="6" viewBox="0 0 8 6"><path d="M0.6 3h5M3.8 0.8L6.6 3 3.8 5.2" fill="none" stroke="#d8d8d8" stroke-width="1.2"/></svg>
<svg style="left:1175px;top:61.8px" width="8" height="8" viewBox="0 0 8 8"><path d="M0.8 2.6h4.6v4.6H0.8zM2.6 2.6V0.8h4.6v4.6H5.4" fill="none" stroke="#c8c8c8" stroke-width="0.9"/></svg>
<svg style="left:1186px;top:61.8px" width="8" height="8" viewBox="0 0 8 8"><circle cx="4" cy="4" r="3.1" fill="none" stroke="#c8c8c8" stroke-width="0.9"/><circle cx="4" cy="4" r="1.3" fill="none" stroke="#c8c8c8" stroke-width="0.9"/></svg>
<svg style="left:1201.5px;top:62.8px" width="9" height="6" viewBox="0 0 9 6"><path d="M3 0.6L0.8 3 3 5.4M6 0.6L8.2 3 6 5.4" fill="none" stroke="#f0f0f0" stroke-width="1.2"/></svg>
<svg style="left:1213px;top:61.4px" width="9" height="9" viewBox="0 0 9 9"><path d="M1 8l4.2-4.2" stroke="#f0f0f0" stroke-width="1.7"/><path d="M4.6 2.2a2.2 2.2 0 013-1.6L6.2 2l0.8 0.8 1.4-1.4a2.2 2.2 0 01-3 3z" fill="#f0f0f0"/></svg>
<div class="b" style="left:1086px;top:72.4px;width:138px;height:12px;background:#333337;"></div>
<div class="t" style="left:1088px;top:74.5px;font-size:6.15px;line-height:8.61px;color:#9a9a9a;">搜索解决方案资源管理器(Ctrl+;)</div>
<div class="b" style="left:1085px;top:699.5px;width:139px;height:13.3px;background:#2d2d30;"></div>
<div class="t" style="left:1087.6px;top:700.67px;font-size:5.9px;line-height:8.26px;color:#0e8ee8;">解决方案...</div>
<div class="t" style="left:1124px;top:700.53px;font-size:6.1px;line-height:8.54px;color:#d4d4d4;">类视图</div>
<div class="t" style="left:1149px;top:700.6px;font-size:6.0px;line-height:8.4px;color:#d4d4d4;">属性管理...</div>
<div class="t" style="left:1186px;top:700.53px;font-size:6.1px;line-height:8.54px;color:#d4d4d4;">资源视图</div>
<div class="t" style="left:1217px;top:700.53px;font-size:6.1px;line-height:8.54px;color:#d4d4d4;">团队资源管理器</div>
<div class="b" style="left:0px;top:712.8px;width:1224px;height:8px;background:#007acc;"></div>
<div class="t" style="left:873px;top:715.86px;font-size:6.2px;line-height:8.68px;color:#ffffff;">行 100</div>
<div class="t" style="left:921px;top:715.86px;font-size:6.2px;line-height:8.68px;color:#ffffff;">列 5</div>
<div class="t" style="left:968px;top:715.86px;font-size:6.2px;line-height:8.68px;color:#ffffff;">字符 5</div>
<div class="t" style="left:1038px;top:715.86px;font-size:6.2px;line-height:8.68px;color:#ffffff;">Ins</div>
<div class="t" style="left:1196px;top:715.86px;font-size:6.2px;line-height:8.68px;color:#ffffff;">↑ 添加到源代码管理</div>
<div class="b" style="left:507.6px;top:84.2px;width:720px;height:461.59999999999997px;background:#ffffff;box-shadow:0 0 5px 1px rgba(0,0,0,0.55);"></div>
<svg style="left:512.4px;top:87.6px" width="8" height="9" viewBox="0 0 8 9"><path d="M0.8 1h6.4v7.4H0.8z" fill="#bfe7e2" stroke="#7ec3bd" stroke-width="0.7"/><path d="M1.2 0.6h5.6v1.8H1.2z" fill="#6cc3d8"/><path d="M2 4h4M2 5.6h4" stroke="#8fb9c4" stroke-width="0.6"/></svg>
<div class="t" style="left:522.6px;top:87.66px;font-size:6.2px;line-height:8.68px;color:#9b9b9b;">无标题 - 记事本</div>
<div class="t" style="left:512px;top:101.07px;font-size:5.9px;line-height:8.26px;color:#8a8a8a;">文件(F)</div>
<div class="t" style="left:538.5px;top:101.07px;font-size:5.9px;line-height:8.26px;color:#8a8a8a;">编辑(E)</div>
<div class="t" style="left:566px;top:101.07px;font-size:5.9px;line-height:8.26px;color:#8a8a8a;">格式(O)</div>
<div class="t" style="left:595px;top:101.07px;font-size:5.9px;line-height:8.26px;color:#8a8a8a;">查看(V)</div>
<div class="t" style="left:622.5px;top:101.07px;font-size:5.9px;line-height:8.26px;color:#8a8a8a;">帮助(H)</div>
<div class="b" style="left:507.6px;top:110.2px;width:720px;height:0.6px;background:#f0f0f0;"></div>
<div class="b" style="left:548.8px;top:111px;width:50.8px;height:8px;background:#0a7be0;"></div>
<div class="b" style="left:507.8px;top:109.9px;font-size:8.15px;line-height:10px;white-space:pre;font-family:'Liberation Serif','Noto Serif CJK SC',serif;color:#1a1a1a;">还要将几个<span style="color:#ffffff;margin-left:0.3px;letter-spacing:0.3px">文字输出倒数</span></div>
<div class="b" style="left:1201px;top:91.2px;width:7px;height:0.9px;background:#c9c9c9;"></div>
<div class="b" style="left:1221.8px;top:57.6px;width:2.2px;height:14.6px;background:#3b4c7c;"></div>
<div class="b" style="left:508.40000000000003px;top:537.4px;width:720px;height:6.7px;background:#ebebeb;"></div>
<div class="b" style="left:508.40000000000003px;top:537.4px;width:11px;height:6.7px;background:#e4e4e4;"></div>
<svg style="left:510.6px;top:538.4px" width="4" height="5" viewBox="0 0 4 5"><path d="M3 0.6L1 2.5l2 1.9" fill="none" stroke="#a8a8a8" stroke-width="0.8"/></svg>
<svg style="left:1018px;top:396.6px" width="5" height="10" viewBox="0 0 5 10"><path d="M0.8 0.6h3.4M0.8 9.4h3.4M2.5 0.6v8.8" fill="none" stroke="#555" stroke-width="0.9"/></svg>
<div class="t" style="left:858.6px;top:32.7px;font-size:26.43px;line-height:30px;font-weight:700;color:rgba(228,228,228,0.93);-webkit-text-stroke:0.5px rgba(228,228,228,0.93);letter-spacing:0px;">bili_34930903650</div>
<div class="b" style="left:1076.9px;top:52.6px;width:4.2px;height:4.2px;background:rgba(228,228,228,0.93);border-radius:2.1px;"></div>
<div class="b" style="left:1084.5px;top:52.6px;width:4.2px;height:4.2px;background:rgba(228,228,228,0.93);border-radius:2.1px;"></div>
<div class="b" style="left:1091.9px;top:52.6px;width:4.2px;height:4.2px;background:rgba(228,228,228,0.93);border-radius:2.1px;"></div>
<svg id="logo" style="left:0;top:0;opacity:0.97" width="1224" height="80" viewBox="0 0 1224 80" font-family="Liberation Sans, sans-serif" font-weight="700" fill="#dcdcdc">
<text transform="translate(1109.33,63.00) skewX(6.53) scale(1.201,1)" font-size="31.13" stroke="#dcdcdc" stroke-width="1.2" stroke-linejoin="round">b</text><polygon points="1106.70,24.30 1113.90,24.30 1115.17,43.05 1108.85,43.05"/>
<text transform="translate(1131.43,61.00) skewX(6.45) scale(1.200,1)" font-size="32.97">i</text>
<text transform="translate(1138.17,60.50) skewX(4.84) scale(0.886,1)" font-size="44.00">l</text>
<text transform="translate(1144.88,61.50) skewX(2.10) scale(1.150,1)" font-size="33.79">i</text>
<text transform="translate(1156.38,63.80) skewX(6.43) scale(1.317,1)" font-size="30.19" stroke="#dcdcdc" stroke-width="1.2" stroke-linejoin="round">b</text><polygon points="1153.90,24.50 1161.50,24.50 1162.80,44.48 1156.15,44.48"/>
<text transform="translate(1178.13,61.00) skewX(5.36) scale(1.170,1)" font-size="33.79">i</text>
<text transform="translate(1185.76,61.00) skewX(5.53) scale(0.886,1)" font-size="44.14">l</text>
<text transform="translate(1192.07,62.00) skewX(2.06) scale(1.130,1)" font-size="34.48">i</text>
<rect x="1131.70" y="36.90" width="5.38" height="6.2" fill="#2d2d30"/>
<rect x="1131.40" y="36.90" width="2.14" height="6.1"/>
<rect x="1135.24" y="36.90" width="2.14" height="6.1"/>
<rect x="1146.90" y="36.80" width="5.29" height="6.2" fill="#2d2d30"/>
<rect x="1146.60" y="36.80" width="2.09" height="6.1"/>
<rect x="1150.39" y="36.80" width="2.09" height="6.1"/>
<rect x="1178.80" y="36.30" width="5.38" height="6.2" fill="#2d2d30"/>
<rect x="1178.50" y="36.30" width="2.14" height="6.1"/>
<rect x="1182.34" y="36.30" width="2.14" height="6.1"/>
<rect x="1194.10" y="36.80" width="5.30" height="6.2" fill="#2d2d30"/>
<rect x="1193.80" y="36.80" width="2.10" height="6.1"/>
<rect x="1197.60" y="36.80" width="2.10" height="6.1"/>
</svg>
<div class="b" style="left:51.6px;top:0px;width:1.6px;height:32px;background:#1fc93a;"></div>
<div class="b" style="left:51.6px;top:0px;width:32.6px;height:1.2px;background:#1fc93a;"></div>
<div class="b" style="left:1164.2px;top:0px;width:1.6px;height:32px;background:#1fc93a;"></div>
<div class="b" style="left:1118px;top:0px;width:47.8px;height:1.2px;background:#1fc93a;"></div>
<div class="b" style="left:51.6px;top:692.8px;width:1.4px;height:28px;background:#1fc93a;"></div>
<div class="b" style="left:1164.4px;top:693.6px;width:1.4px;height:27px;background:#1fc93a;"></div>
</div></body></html>
